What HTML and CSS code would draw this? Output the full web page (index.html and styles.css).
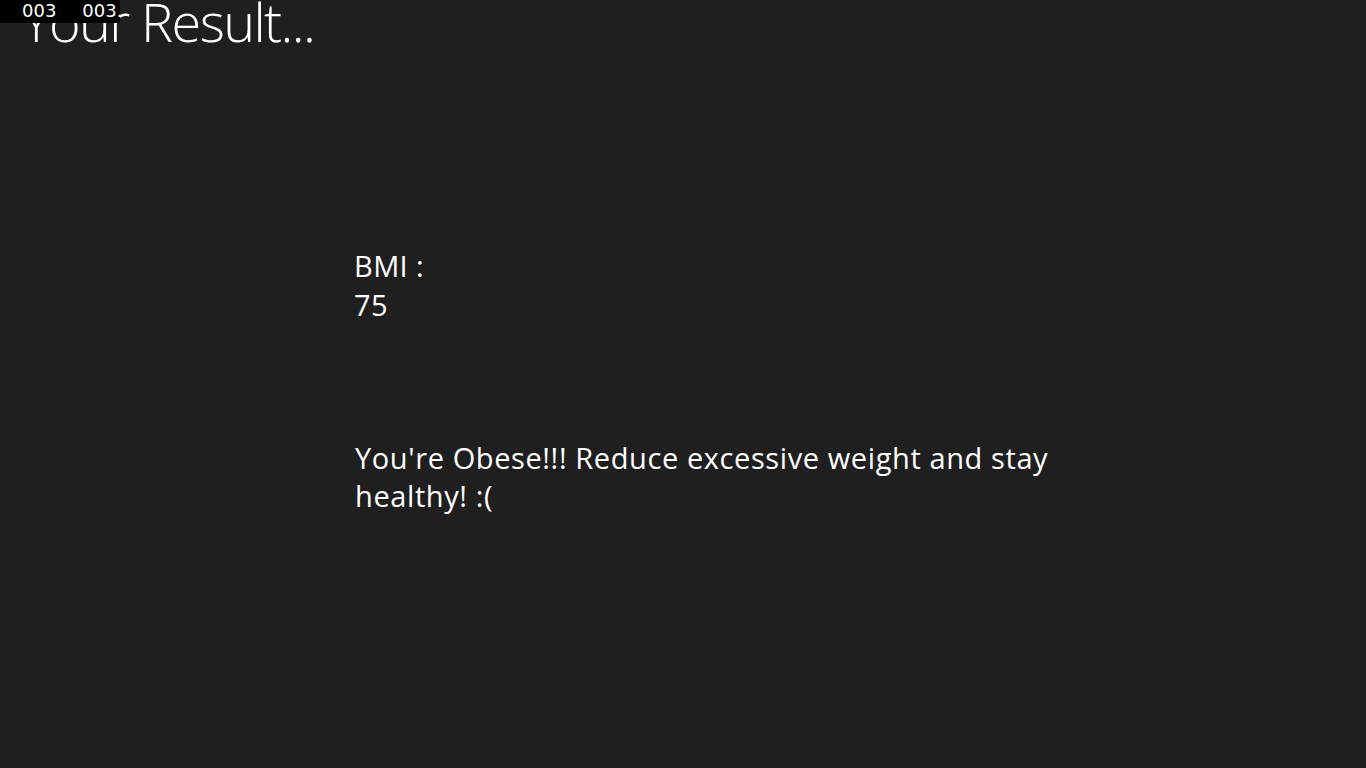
FILE: index.html
```html
<!DOCTYPE html>
<html>
<head>
<meta charset="utf-8">
<link rel="stylesheet" href="styles.css">
</head>
<body>
<div class="page">
  <h1 class="title">Your Result...</h1>
  <div class="content">
    <div class="bmi">
      <div class="label">BMI :</div>
      <div class="value">75</div>
    </div>
    <p class="message">You're Obese!!! Reduce excessive weight and stay healthy! :(</p>
  </div>
</div>
<div class="counter"><span>003</span><span>003.</span></div>
</body>
</html>
```
FILE: styles.css
```css
html, body {
  margin: 0;
  padding: 0;
  background: #1f1f1f;
  color: #ffffff;
  font-family: "Open Sans", "Noto Sans", sans-serif;
  height: 100%;
  overflow: hidden;
}
.page {
  display: flex;
  flex-direction: column;
  padding-left: 22px;
}
.title {
  margin: -14px 0 0 0;
  font-weight: 300;
  font-size: 54px;
  line-height: 70px;
  letter-spacing: -1.6px;
}
.content {
  padding-left: 332px;
  padding-top: 190px;
  display: flex;
  flex-direction: column;
}
.bmi {
  font-size: 29px;
  line-height: 39px;
  letter-spacing: 0.4px;
}
.message {
  margin: 115px 0 0 1px;
  width: 720px;
  font-size: 29px;
  line-height: 38px;
  letter-spacing: 0.6px;
}
.counter {
  position: absolute;
  top: 0;
  left: 0;
  width: 120px;
  height: 23px;
  overflow: hidden;
  background: #000;
  display: flex;
  gap: 26px;
  padding-left: 22px;
  box-sizing: border-box;
  font-family: "DejaVu Sans", sans-serif;
  font-size: 18px;
  line-height: 22px;
  white-space: nowrap;
}
```
